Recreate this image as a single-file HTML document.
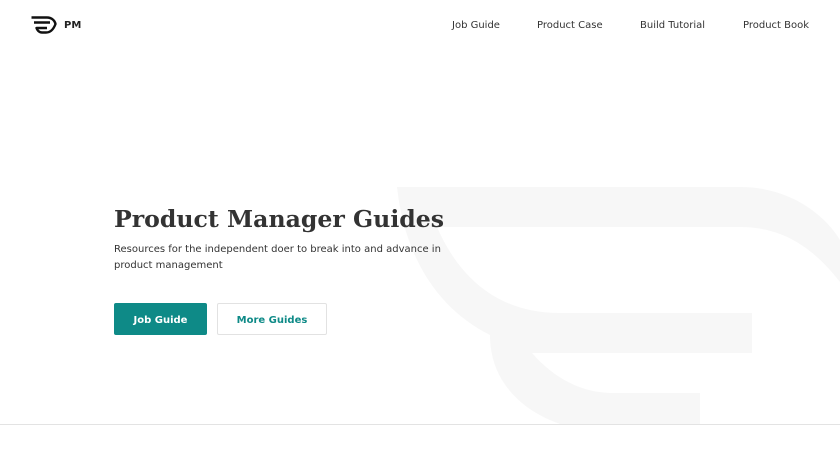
<!DOCTYPE html>
<html><head><meta charset="utf-8"><style>
*{margin:0;padding:0;box-sizing:border-box}
body{width:840px;height:472px;background:#fff;position:relative;overflow:hidden;font-family:"DejaVu Sans","Liberation Sans",sans-serif;color:#333}
.bg{position:absolute;left:0;top:0}
.logo{position:absolute;left:30px;top:15px}
.pm{position:absolute;left:64px;top:20px;font-size:10px;font-weight:bold;color:#222}
.nav a{position:absolute;top:20px;font-size:10px;color:#333;text-decoration:none}
h1{position:absolute;left:114px;top:205px;font-family:"DejaVu Serif","Liberation Serif",serif;font-size:23.6px;font-weight:bold;color:#333;white-space:nowrap}
p{position:absolute;left:114px;top:242px;font-size:10px;line-height:16px;color:#333;width:345px}
.b1{position:absolute;left:114px;top:303px;width:93px;height:32px;background:#0e8a87;border-radius:2px;color:#fff;font-size:10px;font-weight:bold;text-align:center;line-height:35px}
.b2{position:absolute;left:217px;top:303px;width:110px;height:32px;border:1px solid #e2e2e2;border-radius:2px;color:#0e8a87;font-size:10px;font-weight:bold;text-align:center;line-height:33px}
.line{position:absolute;left:0;top:424px;width:840px;height:1px;background:#e3e3e3}
</style></head><body>
<svg class="bg" width="840" height="472"><path fill="#f7f7f7" d="M397,187 H740 C790,187 825,215 840,240 V282 C815,250 785,227 740,227 H437 C460,280 500,313 560,313 H752 V353 H532 C560,385 590,393 613,393 H700 V424 H560 C520,410 490,380 490,335 C440,310 405,260 397,187 Z"/></svg>
<svg class="logo" width="28" height="20" viewBox="0 0 28 20"><path d="M1.5,2.5 H17 C22,2.5 25,6 25.5,9 C24,13 21,17.5 16,17.5 H12 C9,17.5 7,15 6.5,13 H17 M4,7.5 H20" fill="none" stroke="#111" stroke-width="2.4" stroke-linejoin="round"/></svg>
<div class="pm">PM</div>
<div class="nav"><a style="left:452px">Job Guide</a><a style="left:537px">Product Case</a><a style="left:640px">Build Tutorial</a><a style="left:743px">Product Book</a></div>
<h1>Product Manager Guides</h1>
<p>Resources for the independent doer to break into and advance in product management</p>
<div class="b1">Job Guide</div>
<div class="b2">More Guides</div>
<div class="line"></div>
</body></html>
